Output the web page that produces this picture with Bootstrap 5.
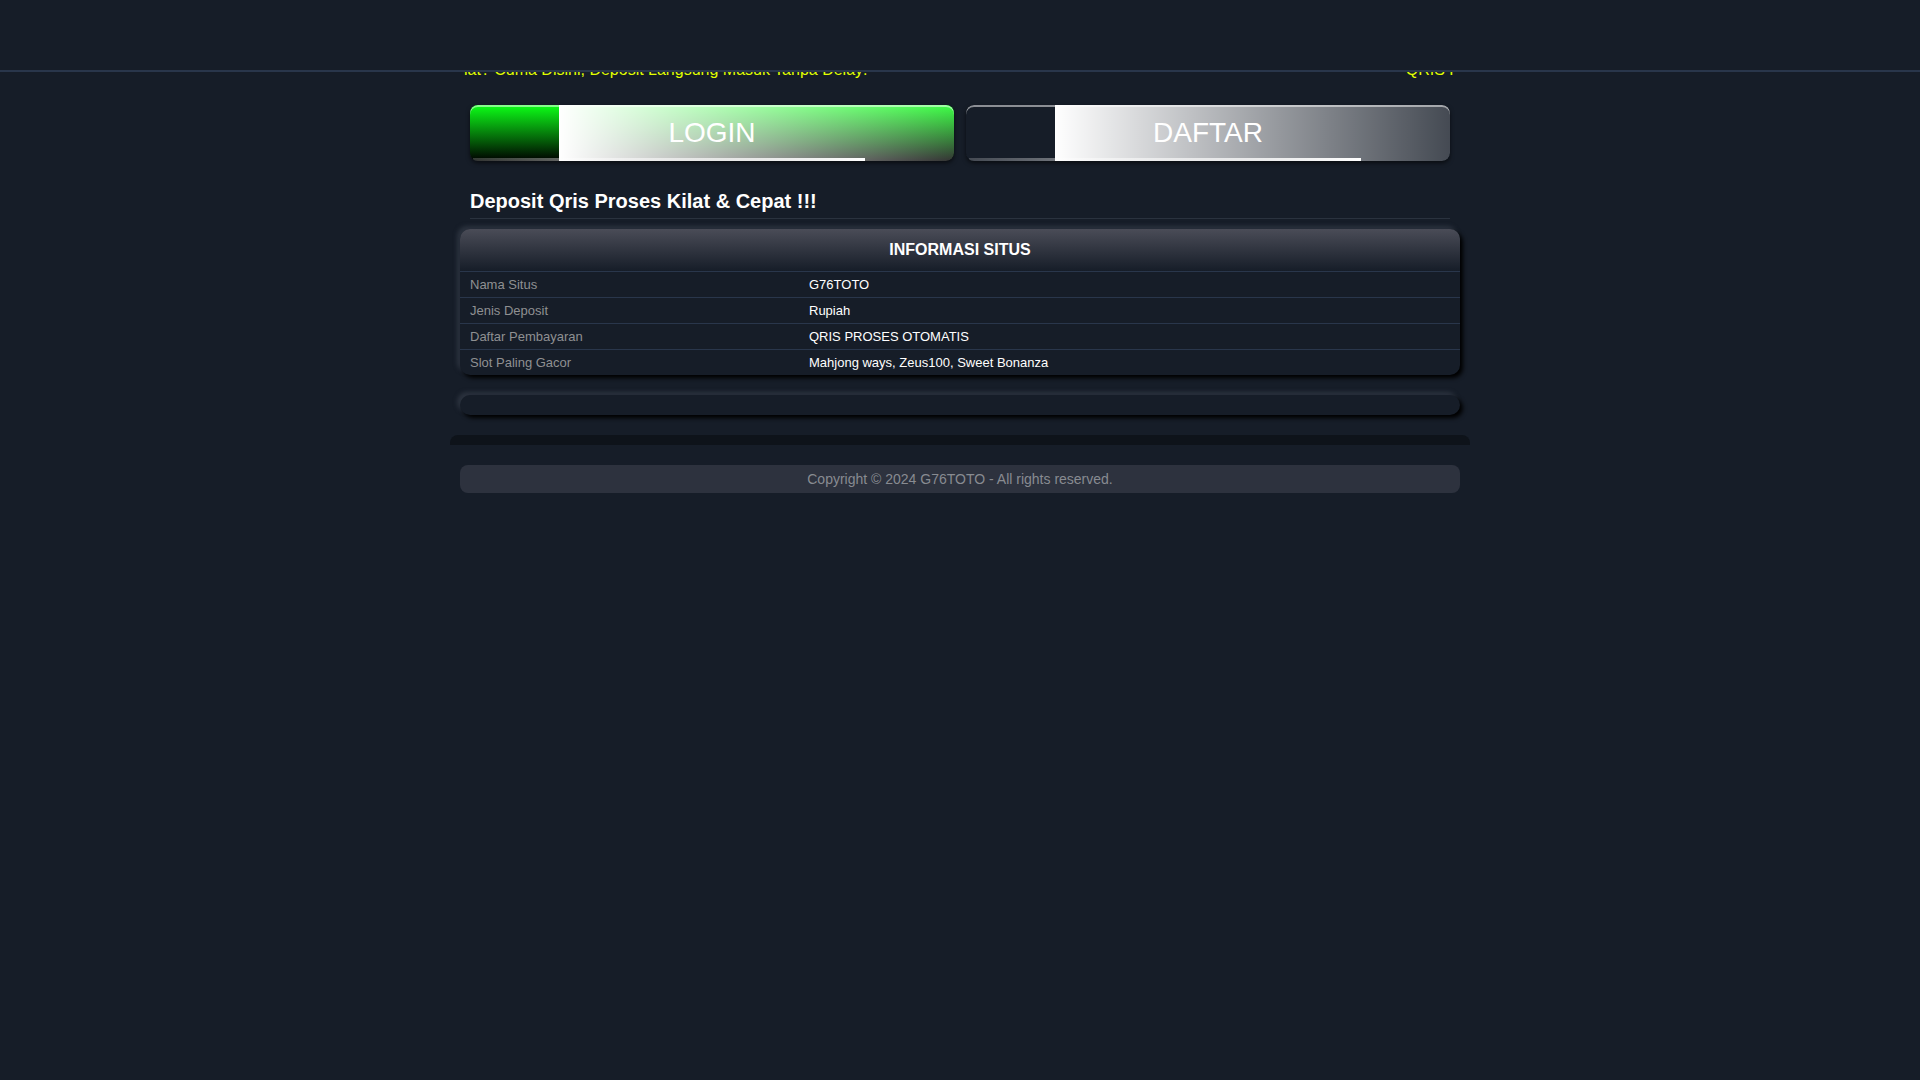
<!DOCTYPE html>
<html lang="id">
<head>
<meta charset="utf-8">
<meta name="viewport" content="width=device-width, initial-scale=1">
<title>G76TOTO</title>
<link href="https://cdn.jsdelivr.net/npm/bootstrap@5.3.0/dist/css/bootstrap.min.css" rel="stylesheet">
<style>
body { background: #161d28; color: #fff; font-family: "Liberation Sans", Arial, sans-serif; font-size: 13px; line-height: 20px; }
.site-header { height: 72px; background: #161d28; border-bottom: 2px solid #29364b; z-index: 10; }
.site-wrap { max-width: 1020px; }
.ticker { height: 24px; margin: -14px 10px 23px; padding-left: 4px; font-size: 16px; line-height: 24px; color: #e1ff00; white-space: nowrap; overflow: hidden; }
.actions { gap: 12px; padding: 0 20px; }
.cta { position: relative; overflow: hidden; height: 56px; border: 0; border-radius: 8px; padding: 0; color: #fff; font-size: 28px; line-height: 56px; text-align: center; text-decoration: none; box-shadow: 0 2px 4px rgba(0,0,0,.6); }
.cta:hover { color: #fff; }
.cta-login { background: linear-gradient(#0cff17, #000); }
.cta-daftar { background: #161d28; }
.cta::before { content: ""; position: absolute; inset: 0; border-radius: 8px; background: linear-gradient(90deg, #fff, rgba(255,255,255,.2)) no-repeat 89px 0 / calc(100% - 89px) 100%; box-shadow: inset 0 2px 0 rgba(255,255,255,.5); }
.cta::after { content: ""; position: absolute; left: 3px; bottom: 0; width: 81%; height: 3px; background: linear-gradient(90deg, rgba(255,255,255,.2), #fff); }
.cta span { position: relative; }
.page-title { margin: 28px 20px 10px; padding-bottom: 5px; border-bottom: 1px solid #2a323e; font-size: 20px; line-height: 24px; font-weight: 700; }
.panel { margin: 0 10px 20px; border-radius: 10px; overflow: hidden; background: #161d28; box-shadow: 3px 3px 4px #000, -3px -3px 4px #2c333f; min-height: 20px; }
.panel-title { margin: 0; height: 42px; font-size: 16px; line-height: 42px; font-weight: 700; background: linear-gradient(#4a4c57, #161d28); }
.info { width: 100%; table-layout: fixed; border-collapse: separate; border-spacing: 0; }
.info th, .info td { border-top: 1px solid #29364b; padding: 0 10px; height: 26px; line-height: 25px; }
.info th { width: 33.9%; font-weight: 400; color: #8f9092; }
.dark-strip { height: 10px; margin-bottom: 20px; border-radius: 8px 8px 0 0; background: #0e131a; }
.copy { margin: 0 10px; border-radius: 8px; background: #2d323e; color: #888b91; font-size: 14px; line-height: 28px; }
</style>
<script src="https://cdn.jsdelivr.net/npm/bootstrap@5.3.0/dist/js/bootstrap.bundle.min.js"></script>
</head>
<body>
<header class="site-header sticky-top"></header>
<main class="site-wrap mx-auto">
  <div class="ticker d-flex justify-content-between"><span>lat? Cuma Disini, Deposit Langsung Masuk Tanpa Delay!</span><span>QRIS P</span></div>
  <div class="actions d-flex">
    <a class="cta cta-login flex-fill w-50" href="#login"><span>LOGIN</span></a>
    <a class="cta cta-daftar flex-fill w-50" href="#daftar"><span>DAFTAR</span></a>
  </div>
  <h1 class="page-title">Deposit Qris Proses Kilat &amp; Cepat !!!</h1>
  <section class="panel">
    <h2 class="panel-title text-center">INFORMASI SITUS</h2>
    <table class="info">
      <tbody>
        <tr><th scope="row">Nama Situs</th><td>G76TOTO</td></tr>
        <tr><th scope="row">Jenis Deposit</th><td>Rupiah</td></tr>
        <tr><th scope="row">Daftar Pembayaran</th><td>QRIS PROSES OTOMATIS</td></tr>
        <tr><th scope="row">Slot Paling Gacor</th><td>Mahjong ways, Zeus100, Sweet Bonanza</td></tr>
      </tbody>
    </table>
  </section>
  <section class="panel"></section>
  <div class="dark-strip"></div>
</main>
<footer class="site-wrap mx-auto"><div class="copy text-center">Copyright © 2024 G76TOTO - All rights reserved.</div></footer>
</body>
</html>
